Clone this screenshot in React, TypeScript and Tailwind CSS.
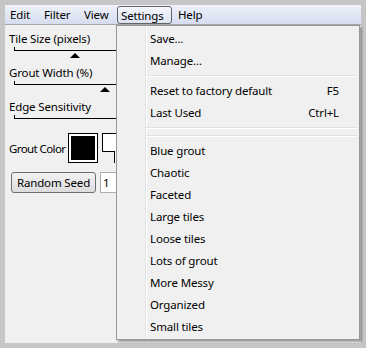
import React from "react";

const font = { fontFamily: '"Noto Sans", "Liberation Sans", sans-serif' };

function Slider({ thumb, line = true }: { thumb?: number; line?: boolean }) {
  return (
    <div className="relative h-[19px]">
      {line && <div className="absolute left-[5px] top-[4px] w-[200px] h-[1px] bg-black" />}
      <div className="absolute left-[5px] top-[1px] w-[1px] h-[4px] bg-black" />
      {thumb !== undefined && (
        <div
          className="absolute top-[7px] w-0 h-0 border-l-[5px] border-r-[5px] border-b-[5px] border-l-transparent border-r-transparent border-b-black"
          style={{ left: thumb }}
        />
      )}
    </div>
  );
}

function Item({ label, shortcut }: { label: string; shortcut?: string }) {
  return (
    <div className="h-[22px] flex items-center pl-[33px] pr-[20px] text-black">
      <span className="flex-1">{label}</span>
      {shortcut && <span>{shortcut}</span>}
    </div>
  );
}

function Sep() {
  return (
    <div className="h-[8px] pt-[4px] pl-[29px] pr-[2px]">
      <div className="h-[1px] bg-[#e0e0e0]" />
      <div className="h-[1px] bg-white" />
    </div>
  );
}

export default function App() {
  return (
    <div className="w-[366px] h-[348px] bg-[#c6c6c6] p-[5px] text-[11.5px] leading-[15px] whitespace-nowrap tracking-[-0.15px]" style={font}>
      <div className="relative w-[356px] h-[338px] bg-[#f0f0f0]">
        {/* menu bar */}
        <div className="h-[20px] border-b border-[#a6a6a6] bg-gradient-to-b from-[#eef1f9] to-[#d6ddef] flex items-center pl-[5px] text-black">
          <span className="w-[34px]">Edit</span>
          <span className="w-[40px]">Filter</span>
          <span className="w-[33px]">View</span>
          <span className="w-[55px] h-[18px] mt-[1px] flex items-center pl-[3px] border border-[#646464] rounded-[3px] bg-gradient-to-b from-[#f4f6fb] to-[#dde3f1]">
            Settings
          </span>
          <span className="ml-[6px]">Help</span>
        </div>

        {/* left panel */}
        <div className="pl-[4px] pt-[6px] text-black">
          <div className="h-[15px]">Tile Size (pixels)</div>
          <Slider thumb={61} />
          <div className="h-[15px]">Grout Width (%)</div>
          <Slider thumb={91} />
          <div className="h-[15px]">Edge Sensitivity</div>
          <Slider />
          <div className="h-[30px] flex items-center">
            <span className="w-[59px] tracking-[-0.6px]">Grout Color</span>
            <div className="w-[30px] h-[30px] border border-black bg-white p-[2px]">
              <div className="w-full h-full bg-black" />
            </div>
            <div className="relative ml-[4px] w-[40px] h-[30px]">
              <div className="absolute left-0 top-0 w-[40px] h-[19px] border border-black bg-white" />
              <div className="absolute left-[12px] top-[18px] w-[30px] h-[12px] border-l border-black bg-white" />
            </div>
          </div>
          <div className="flex items-center mt-[9px] pl-[2px]">
            <button className="w-[85px] h-[21px] border border-[#707070] rounded-[3px] bg-gradient-to-b from-[#f2f2f2] to-[#dcdcdc] text-black text-[11.5px] leading-[15px] tracking-[-0.15px]" style={font}>
              Random Seed
            </button>
            <div className="ml-[4px] w-[40px] h-[21px] border border-[#abadb3] bg-white pl-[2px] flex items-center">1</div>
          </div>
        </div>

        {/* dropdown */}
        <div className="absolute left-[111px] top-[20px] w-[244px] h-[315px] border border-[#979797] bg-[#f0f0f0] shadow-[2px_2px_2px_rgba(0,0,0,0.35)]">
          <div className="absolute left-[28px] top-0 bottom-0 w-[1px] bg-[#e2e3e3]" />
          <div className="absolute left-[29px] top-0 bottom-0 w-[1px] bg-white" />
          <div className="relative pt-[1px]">
            <Item label="Save..." />
            <Item label="Manage..." />
            <Sep />
            <Item label="Reset to factory default" shortcut="F5" />
            <Item label="Last Used" shortcut="Ctrl+L" />
            <Sep />
            <Sep />
            <Item label="Blue grout" />
            <Item label="Chaotic" />
            <Item label="Faceted" />
            <Item label="Large tiles" />
            <Item label="Loose tiles" />
            <Item label="Lots of grout" />
            <Item label="More Messy" />
            <Item label="Organized" />
            <Item label="Small tiles" />
          </div>
        </div>
      </div>
    </div>
  );
}
